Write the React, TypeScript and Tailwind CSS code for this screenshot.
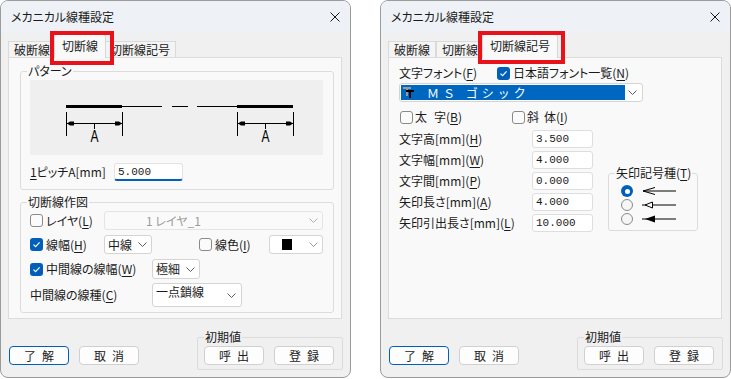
import React from 'react';

const jp = "font-['Noto_Sans_CJK_JP','Noto_Sans_CJK_SC',sans-serif]";
const palt = "[font-feature-settings:'palt']";
const mono = "font-['Liberation_Mono','DejaVu_Sans_Mono',monospace]";

const U = ({ c }: { c: string }) => <span className="underline underline-offset-[2px] decoration-1">{c}</span>;

const Chevron = ({ color = '#5c5c5c' }: { color?: string }) => (
  <svg width="9" height="5" viewBox="0 0 9 5" className="shrink-0">
    <path d="M0.5 0.5 L4.5 4.5 L8.5 0.5" fill="none" stroke={color} strokeWidth="1" />
  </svg>
);

const Check = ({ on }: { on?: boolean }) =>
  on ? (
    <span className="w-[13px] h-[13px] rounded-[3px] bg-[#005fb8] flex items-center justify-center shrink-0">
      <svg width="9" height="9" viewBox="0 0 9 9">
        <path d="M1.5 4.6 L3.6 6.7 L7.6 2.3" fill="none" stroke="#fff" strokeWidth="1.2" />
      </svg>
    </span>
  ) : (
    <span className="w-[13px] h-[13px] rounded-[3px] border border-[#8a8a8a] bg-[#fbfbfb] shrink-0" />
  );

const Radio = ({ on }: { on?: boolean }) =>
  on ? (
    <span className="w-[12px] h-[12px] rounded-full bg-[#005fb8] flex items-center justify-center shrink-0">
      <span className="w-[5px] h-[5px] rounded-full bg-white" />
    </span>
  ) : (
    <span className="w-[12px] h-[12px] rounded-full border border-[#8a8a8a] bg-[#f6f6f6] shrink-0" />
  );

const Btn = ({ label, def }: { label: string; def?: boolean }) => (
  <div
    className={`w-[60px] h-[19px] rounded-[4px] border ${def ? 'border-[#005fb8]' : 'border-[#d0d0d0]'} bg-[#fdfdfd] flex items-center justify-center pl-[6px] text-[12px] leading-none tracking-[6px]`}
  >
    {label}
  </div>
);

const Num = ({ v }: { v: string }) => (
  <div className={`w-[61px] h-[18px] bg-white border border-[#dedede] rounded-[3px] flex items-center pl-[3px] text-[11px] ${mono}`}>{v}</div>
);

const Tab = ({ label, w, sel }: { label: string; w: string; sel?: boolean }) =>
  sel ? (
    <div className={`${w} h-[24px] -mx-[2px] relative z-10 bg-[#f9f9f9] border border-b-0 border-[#d6d6d6] rounded-t-[3px] flex items-center justify-center pb-[2px]`}>
      {label}
    </div>
  ) : (
    <div className={`${w} h-[16px] mb-[1px] bg-[#f4f4f4] border border-b-0 border-[#dadada] flex items-center justify-center`}>{label}</div>
  );

function Dialog({ tabs, red, children }: { tabs: React.ReactNode; red: string; children: React.ReactNode }) {
  return (
    <div className="relative w-[351px] h-[378px] shrink-0 flex flex-col border border-[#9b9b9b] rounded-[8px] bg-[#f0f0f0] overflow-hidden">
      <div className="h-[32px] bg-[#eef2f7] flex items-center justify-between pl-[10px] pr-[10px]">
        <span className={palt}>メカニカル線種設定</span>
        <svg width="10" height="10" viewBox="0 0 10 10">
          <path d="M0.5 0.5 L9.5 9.5 M9.5 0.5 L0.5 9.5" stroke="#1a1a1a" strokeWidth="1" />
        </svg>
      </div>
      <div className="pl-[7px] pr-[8px]">
        <div className="h-[25px] -mb-[1px] flex items-end">{tabs}</div>
        <div className="h-[262px] border border-[#dcdcdc] bg-[#f9f9f9]">{children}</div>
      </div>
      <div className="flex pl-[8px] pr-[7px]">
        <div className="flex gap-[10px] mt-[27px]">
          <Btn label="了解" def />
          <Btn label="取消" />
        </div>
        <fieldset className="ml-auto mt-[11px] w-[146px] h-[40px] border border-[#dcdcdc] rounded-[2px]">
          <legend className="ml-[6px] px-[1px] leading-[14px]">初期値</legend>
          <div className="flex gap-[10px] pl-[6px] mt-[2px]">
            <Btn label="呼出" />
            <Btn label="登録" />
          </div>
        </fieldset>
      </div>
      <div className={`absolute border-4 border-[#e8131a] z-20 ${red}`} />
    </div>
  );
}

function Pattern() {
  const dim = (a: number, b: number) => (
    <g>
      <line x1={a + 0.5} y1="32" x2={a + 0.5} y2="56" stroke="#000" />
      <line x1={b + 0.5} y1="32" x2={b + 0.5} y2="56" stroke="#000" />
      <line x1={a} y1="43.5" x2={b} y2="43.5" stroke="#000" />
      <polygon points={`${a + 1},43.5 ${a + 4},41.5 ${a + 8},41.5 ${a + 8},45.5 ${a + 4},45.5`} fill="#000" />
      <polygon points={`${b},43.5 ${b - 3},41.5 ${b - 7},41.5 ${b - 7},45.5 ${b - 3},45.5`} fill="#000" />
      <line x1={(a + b) / 2 + 0.5} y1="44" x2={(a + b) / 2 + 0.5} y2="49" stroke="#000" />
      <text
        x={(a + b) / 2 - 3.5}
        y="62"
        fontSize="16"
        textLength="8"
        lengthAdjust="spacingAndGlyphs"
        fontFamily="Liberation Sans, sans-serif"
        fill="#000"
      >
        A
      </text>
    </g>
  );
  return (
    <svg width="293" height="75" viewBox="0 0 293 75">
      <g stroke="#000" fill="none">
        <line x1="36" y1="26.5" x2="92" y2="26.5" strokeWidth="3" />
        <line x1="92" y1="26.5" x2="132" y2="26.5" />
        <line x1="142" y1="26.5" x2="158" y2="26.5" />
        <line x1="167" y1="26.5" x2="207" y2="26.5" />
        <line x1="207" y1="26.5" x2="263" y2="26.5" strokeWidth="3" />
      </g>
      {dim(36, 92)}
      {dim(207, 263)}
    </svg>
  );
}

function LeftPanel() {
  return (
    <div className={`flex flex-col ${palt}`}>
      <fieldset className="ml-[11px] mt-[6px] w-[314px] h-[126px] border border-[#dcdcdc] rounded-[3px]">
        <legend className="ml-[6px] px-[1px] leading-[14px]">パターン</legend>
        <div className="ml-[9px] mt-[2px] w-[293px] h-[75px] bg-[#efefef]">
          <Pattern />
        </div>
        <div className="ml-[9px] mt-[8px] h-[18px] flex items-center">
          <span className="w-[84px]">
            <U c="1" />ピッチA[mm]
          </span>
          <div className={`w-[69px] h-[18px] bg-white border border-[#e3e3e3] border-b-2 border-b-[#005fb8] rounded-[3px] flex items-center pl-[3px] text-[11px] ${mono}`}>
            5.000
          </div>
        </div>
      </fieldset>
      <fieldset className="ml-[11px] mt-[5px] w-[314px] h-[118px] border border-[#dcdcdc] rounded-[3px]">
        <legend className="ml-[6px] px-[1px] leading-[14px]">切断線作図</legend>
        <div className="flex flex-col pl-[9px]">
          <div className="mt-[2px] h-[19px] flex items-center">
            <div className="w-[74px] flex items-center">
              <Check />
              <span className="ml-[3px]">
                レイヤ(<U c="L" />)
              </span>
            </div>
            <div className="w-[219px] h-[19px] border border-[#e4e4e4] rounded-[3px] bg-[#fafafa] flex items-center justify-between pl-[41px] pr-[4px] text-[#9a9a9a]">
              <span>1 レイヤ_1</span>
              <Chevron color="#b0b0b0" />
            </div>
          </div>
          <div className="mt-[5px] h-[19px] flex items-center">
            <div className="w-[74px] flex items-center">
              <Check on />
              <span className="ml-[3px]">
                線幅(<U c="H" />)
              </span>
            </div>
            <div className="w-[48px] h-[19px] border border-[#d4d4d4] rounded-[3px] bg-white flex items-center justify-between pl-[3px] pr-[4px]">
              <span>中線</span>
              <Chevron />
            </div>
            <div className="ml-[47px] w-[70px] flex items-center">
              <Check />
              <span className="ml-[3px]">
                線色(<U c="I" />)
              </span>
            </div>
            <div className="w-[54px] h-[19px] border border-[#d4d4d4] rounded-[3px] bg-white flex items-center justify-between pl-[12px] pr-[4px]">
              <span className="w-[10px] h-[11px] bg-black" />
              <Chevron color="#9a9a9a" />
            </div>
          </div>
          <div className="mt-[5px] h-[20px] flex items-center">
            <div className="w-[122px] flex items-center">
              <Check on />
              <span className="ml-[3px]">
                中間線の線幅(<U c="W" />)
              </span>
            </div>
            <div className="w-[48px] h-[20px] border border-[#d4d4d4] rounded-[3px] bg-white flex items-center justify-between pl-[3px] pr-[4px]">
              <span>極細</span>
              <Chevron />
            </div>
          </div>
          <div className="mt-[4px] h-[24px] flex items-center">
            <span className="w-[122px]">
              中間線の線種(<U c="C" />)
            </span>
            <div className="w-[90px] h-[24px] border border-[#d4d4d4] rounded-[3px] bg-white flex items-center justify-between pl-[3px] pr-[5px]">
              <span className="self-start pt-[1px]">一点鎖線</span>
              <Chevron />
            </div>
          </div>
        </div>
      </fieldset>
    </div>
  );
}

function RightPanel() {
  const rows: [string, string, string][] = [
    ['文字高[mm](', 'H', '3.500'],
    ['文字幅[mm](', 'W', '4.000'],
    ['文字間[mm](', 'P', '0.000'],
    ['矢印長さ[mm](', 'A', '4.000'],
    ['矢印引出長さ[mm](', 'L', '10.000'],
  ];
  return (
    <div className={`flex flex-col pl-[10px] pt-[8px] ${palt}`}>
      <div className="h-[14px] flex items-center">
        <span className="w-[98px]">
          文字フォント(<U c="F" />)
        </span>
        <Check on />
        <span className="ml-[3px]">
          日本語フォント一覧(<U c="N" />)
        </span>
      </div>
      <div className="mt-[3px] w-[244px] h-[19px] border border-[#d4d4d4] rounded-[3px] bg-white flex items-center justify-between pr-[5px]">
        <div className="ml-[1px] w-[224px] h-[15px] bg-[#0067c0] flex items-center pl-[2px]">
          <svg width="12" height="11" viewBox="0 0 12 11">
            <rect x="0" y="0" width="8" height="2" fill="#9a9a9a" />
            <rect x="3" y="0" width="2" height="9" fill="#9a9a9a" />
            <rect x="3" y="3" width="8" height="2" fill="#000" />
            <rect x="6" y="3" width="2" height="8" fill="#000" />
          </svg>
          <span className="ml-[12px] text-white tracking-[4px] [font-feature-settings:normal]">ＭＳ ゴシック</span>
        </div>
        <Chevron />
      </div>
      <div className="mt-[8px] h-[14px] flex items-center">
        <div className="ml-[1px] w-[112px] flex items-center">
          <Check />
          <span className="ml-[2px]">
            太<span className="ml-[7px]">字</span>(<U c="B" />)
          </span>
        </div>
        <Check />
        <span className="ml-[2px]">
          斜<span className="ml-[5px]">体</span>(<U c="I" />)
        </span>
      </div>
      <div className="mt-[6px] flex items-start">
        <div className="flex flex-col gap-[3px]">
          {rows.map(([l, k, v]) => (
            <div key={k} className="h-[18px] flex items-center">
              <span className="w-[133px]">
                {l}
                <U c={k} />)
              </span>
              <Num v={v} />
            </div>
          ))}
        </div>
        <fieldset className="ml-[15px] mt-[36px] w-[90px] h-[65px] border border-[#dcdcdc] rounded-[3px]">
          <legend className="ml-[6px] px-[1px] leading-[14px]">
            矢印記号種(<U c="T" />)
          </legend>
          <div className="flex flex-col pl-[12px] mt-[4px]">
            <div className="h-[14px] flex items-center gap-[9px]">
              <Radio on />
              <svg width="34" height="10" viewBox="0 0 34 10">
                <path d="M1 5 H34 M1 5 L13 1.5 M1 5 L13 8.5" stroke="#000" fill="none" />
              </svg>
            </div>
            <div className="h-[14px] flex items-center gap-[9px]">
              <Radio />
              <svg width="34" height="10" viewBox="0 0 34 10">
                <path d="M0 5 H34" stroke="#000" />
                <path d="M3 5 L10.5 2 L10.5 8 Z" stroke="#000" fill="#fff" />
              </svg>
            </div>
            <div className="h-[14px] flex items-center gap-[9px]">
              <Radio />
              <svg width="34" height="10" viewBox="0 0 34 10">
                <path d="M0 5 H34" stroke="#000" />
                <path d="M3 5 L13 1.5 L13 8.5 Z" fill="#000" />
              </svg>
            </div>
          </div>
        </fieldset>
      </div>
    </div>
  );
}

export default function App() {
  return (
    <div className={`w-[731px] h-[379px] bg-white flex items-start gap-[29px] overflow-hidden text-[12px] leading-[14px] text-[#1a1a1a] ${jp}`}>
      <Dialog
        red="left-[49px] top-[30px] w-[64px] h-[34px]"
        tabs={
          <>
            <Tab label="破断線" w="w-[48px]" />
            <Tab label="切断線" w="w-[52px]" sel />
            <Tab label="切断線記号" w="w-[72px]" />
          </>
        }
      >
        <LeftPanel />
      </Dialog>
      <Dialog
        red="left-[97px] top-[30px] w-[87px] h-[33px]"
        tabs={
          <>
            <Tab label="破断線" w="w-[48px]" />
            <Tab label="切断線" w="w-[48px]" />
            <Tab label="切断線記号" w="w-[76px]" sel />
          </>
        }
      >
        <RightPanel />
      </Dialog>
    </div>
  );
}
